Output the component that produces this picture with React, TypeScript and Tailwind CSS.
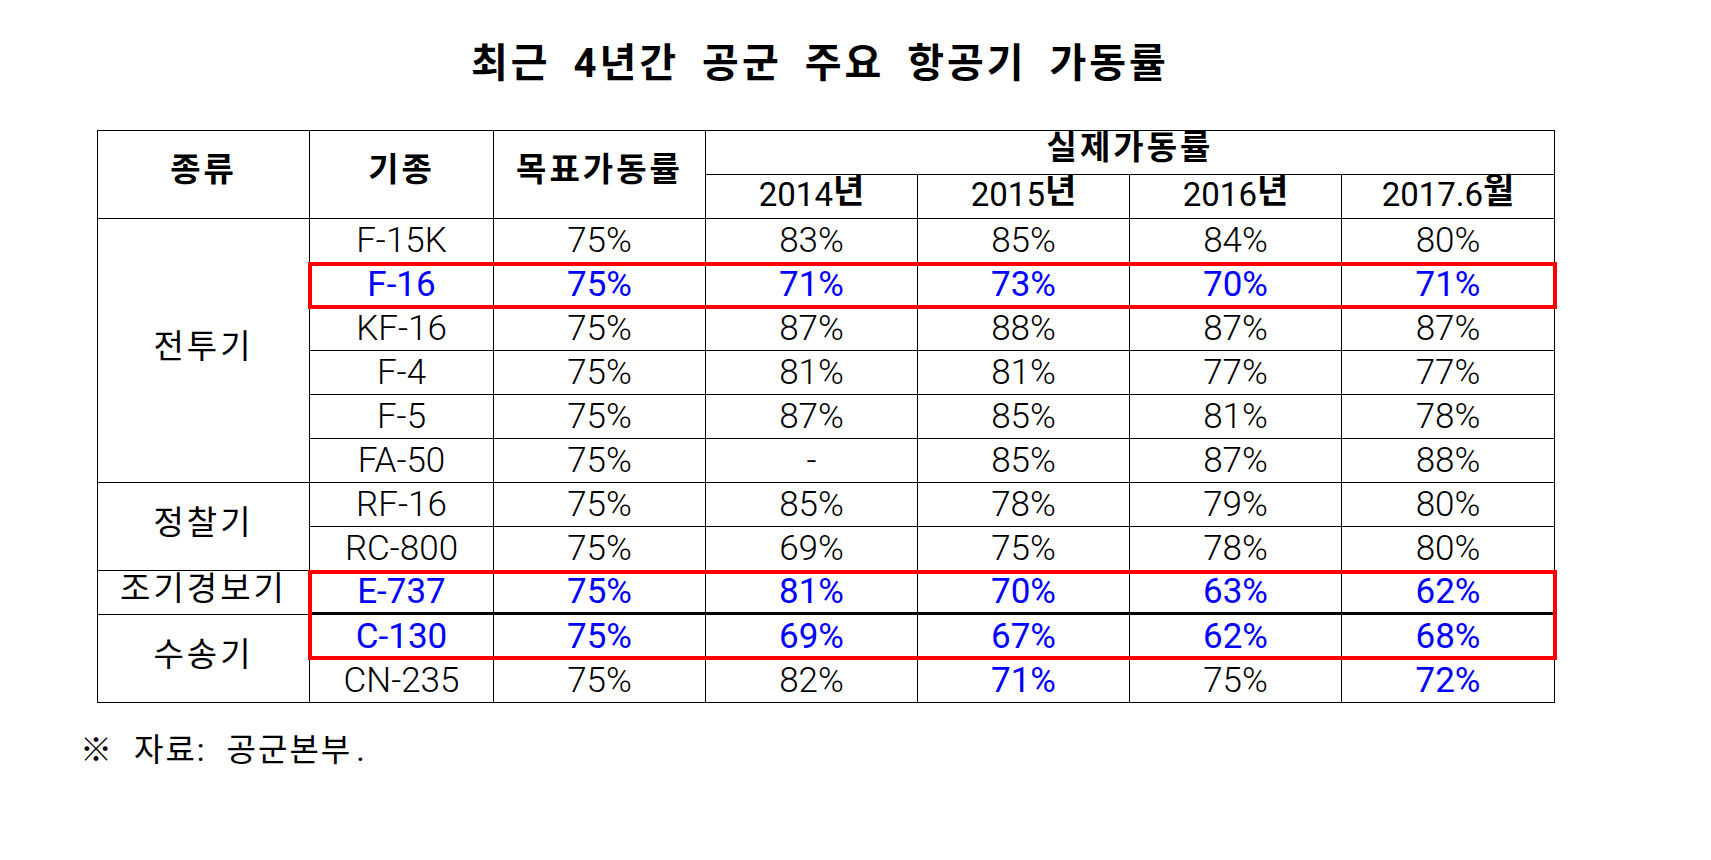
type Row = {
  name: string
  values: string[]
  blue?: boolean
  blueCols?: number[]
  thick?: boolean
}

type Group = {
  label: string
  rows: Row[]
}

const groups: Group[] = [
  {
    label: '전투기',
    rows: [
      {name: 'F-15K', values: ['75%', '83%', '85%', '84%', '80%']},
      {name: 'F-16', values: ['75%', '71%', '73%', '70%', '71%'], blue: true},
      {name: 'KF-16', values: ['75%', '87%', '88%', '87%', '87%']},
      {name: 'F-4', values: ['75%', '81%', '81%', '77%', '77%']},
      {name: 'F-5', values: ['75%', '87%', '85%', '81%', '78%']},
      {name: 'FA-50', values: ['75%', '-', '85%', '87%', '88%']},
    ],
  },
  {
    label: '정찰기',
    rows: [
      {name: 'RF-16', values: ['75%', '85%', '78%', '79%', '80%']},
      {name: 'RC-800', values: ['75%', '69%', '75%', '78%', '80%']},
    ],
  },
  {
    label: '조기경보기',
    rows: [{name: 'E-737', values: ['75%', '81%', '70%', '63%', '62%'], blue: true, thick: true}],
  },
  {
    label: '수송기',
    rows: [
      {name: 'C-130', values: ['75%', '69%', '67%', '62%', '68%'], blue: true},
      {name: 'CN-235', values: ['75%', '82%', '71%', '75%', '72%'], blueCols: [2, 4]},
    ],
  },
]

const spans: Record<number, string> = {
  1: 'row-span-1',
  2: 'row-span-2',
  6: 'row-span-6',
}

const years = [
  {num: '2014', suffix: '년'},
  {num: '2015', suffix: '년'},
  {num: '2016', suffix: '년'},
  {num: '2017.6', suffix: '월'},
]

const cell = 'flex items-center justify-center border-r border-b border-black'

function DataCell({text, blue, thick}: {text: string; blue: boolean; thick?: boolean}) {
  return (
    <div className={`${cell} ${thick ? 'border-b-[3px]' : ''}`}>
      <span className={`text-[35px] leading-none ${blue ? 'font-normal text-[#0000ff]' : 'font-light text-black'}`}>{text}</span>
    </div>
  )
}

export default function App() {
  return (
    <main className="min-h-screen bg-white pl-[80px] pt-[44px] font-['Roboto','Noto_Sans_CJK_KR',sans-serif] text-black">
      <h1 className="ml-[17px] w-[1458px] pr-[12px] text-center text-[40px] leading-none font-bold tracking-[3px] [word-spacing:10px]">
        최근 4년간 공군 주요 항공기 가동률
      </h1>

      <div className="relative mt-[46px] ml-[17px] w-[1458px]">
        <div className="grid grid-cols-[212px_184px_212px_212px_212px_212px_213px] auto-rows-[44px] border-t border-l border-black">
          <div className={`${cell} row-span-2 pb-[10px]`}>
            <span className="text-[33px] leading-none font-bold tracking-[3px]">종류</span>
          </div>
          <div className={`${cell} row-span-2 pb-[10px]`}>
            <span className="text-[33px] leading-none font-bold tracking-[3px]">기종</span>
          </div>
          <div className={`${cell} row-span-2 pb-[10px]`}>
            <span className="text-[33px] leading-none font-bold tracking-[3px]">목표가동률</span>
          </div>
          <div className={`${cell} col-span-4 items-start`}>
            <span className="text-[33px] leading-none font-bold tracking-[3px]">실제가동률</span>
          </div>
          {years.map((y) => (
            <div key={y.num} className={`${cell} pb-[4px]`}>
              <span className="text-[33px] leading-none font-normal">{y.num}</span>
              <span className="relative -top-[4px] text-[34px] leading-none font-bold">{y.suffix}</span>
            </div>
          ))}

          {groups.map((g) =>
            g.rows.map((r, i) => (
              <>
                {i === 0 ? (
                  <div key={`${g.label}-label`} className={`${cell} ${spans[g.rows.length]} pb-[8px]`}>
                    <span className="text-[33px] leading-none font-normal tracking-[3px]">{g.label}</span>
                  </div>
                ) : null}
                <DataCell key={`${r.name}-name`} text={r.name} blue={!!r.blue} thick={r.thick} />
                {r.values.map((v, j) => (
                  <DataCell
                    key={`${r.name}-${j}`}
                    text={v}
                    blue={!!r.blue || !!r.blueCols?.includes(j)}
                    thick={r.thick}
                  />
                ))}
              </>
            )),
          )}
        </div>

        <div className="pointer-events-none absolute top-[132px] left-[211px] h-[47px] w-[1249px] border-4 border-[#ff0000]" />
        <div className="pointer-events-none absolute top-[440px] left-[211px] h-[90px] w-[1249px] border-4 border-[#ff0000]" />
      </div>

      <p className="mt-[31px] text-[32px] leading-none font-normal tracking-[2px] [word-spacing:10px]">
        ※ 자료: 공군본부<span className="ml-[4px]">.</span>
      </p>
    </main>
  )
}
